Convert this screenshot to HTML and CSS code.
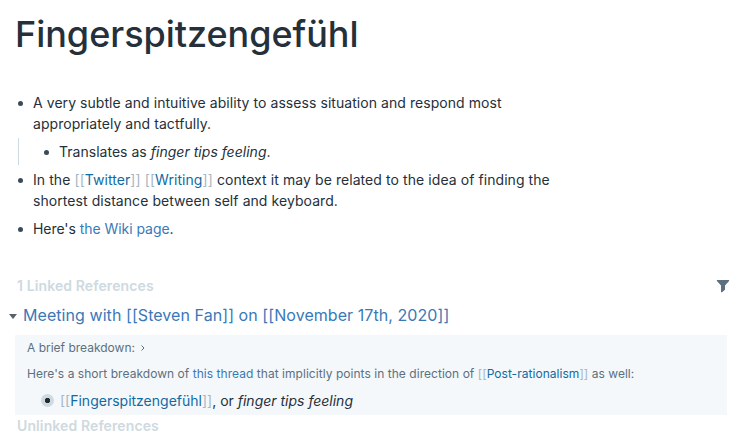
FILE: index.html
```html
<!DOCTYPE html>
<html lang="en">
<head>
<meta charset="utf-8">
<title>Fingerspitzengefühl</title>
<link rel="stylesheet" href="styles.css">
</head>
<body>
<h1>Fingerspitzengefühl</h1>
<ul class="blocks">
  <li><p>A very subtle and intuitive ability to assess situation and respond most<br>appropriately and tactfully.</p>
    <ul class="nested"><li><p>Translates as <em>finger tips feeling</em>.</p></li></ul>
  </li>
  <li><p class="wide">In the <span class="br">[[</span><a class="ref">Twitter</a><span class="br">]]</span> <span class="br">[[</span><a class="ref">Writing</a><span class="br">]]</span> context it may be related to the idea of finding the<br>shortest distance between self and keyboard.</p></li>
  <li><p class="tight">Here's <a>the Wiki page</a>.</p></li>
</ul>
<section class="references">
  <header class="refs-head"><strong>1 Linked References</strong>
    <svg class="filter" viewBox="0 0 14 14"><path d="M1.3 1h11.4q.9.3.4 1L9 6.5v4.2L6 13.2q-.8.4-1-.4V6.5L.9 2Q.4 1.3 1.3 1z"/></svg>
  </header>
  <h2><span class="caret"></span><a>Meeting with [[Steven Fan]] on [[November 17th, 2020]]</a></h2>
  <div class="card">
    <div class="crumb">A brief breakdown: <svg class="chev" viewBox="0 0 6 8"><path d="M1.5 1.5 4 4 1.5 6.5"/></svg></div>
    <div class="crumb context">Here's a short breakdown of <a>this thread</a> that implicitly points in the direction of <span class="br">[[</span><a class="ref">Post-rationalism</a><span class="br">]]</span> as well:</div>
    <div class="result"><span class="bullet"></span><p><span class="br">[[</span><a class="ref">Fingerspitzengefühl</a><span class="br">]]</span>, or <em>finger tips feeling</em></p></div>
  </div>
  <strong class="unlinked">Unlinked References</strong>
</section>
</body>
</html>
```
FILE: styles.css
```css
* { box-sizing: border-box; }
body { margin: 0; padding: 8px 15px 0; height: 444px; overflow: hidden; background: #fff; color: #25303a; font: 14px/21px Inter, sans-serif; }
h1, h2, p, ul { margin: 0; padding: 0; }
h1 { height: 84px; font-size: 36px; line-height: 52px; font-weight: 500; white-space: nowrap; letter-spacing: -.03px; }
a { color: #3a79b7; }
.ref { color: #106ba3; }
.br { color: #a7b6c2; }
ul { list-style: none; }
.blocks > li { margin-bottom: 7px; }
.blocks p { position: relative; padding-left: 18px; white-space: nowrap; word-spacing: .05px; letter-spacing: .05px; }
.blocks .wide { word-spacing: .1px; letter-spacing: .052px; }
.blocks .tight { word-spacing: 0; letter-spacing: -.05px; }
.blocks p::before { content: ""; position: absolute; left: 3px; top: 9px; width: 5px; height: 5px; border-radius: 50%; background: #394b59; }
.nested { margin: 4px 0 -1px 3px; padding: 3px 0 3px 22px; border-left: 1px solid #ced9e0; }
.blocks .nested p { letter-spacing: .02px; }
.blocks > li:first-child { margin-bottom: 5px; }
.references { margin-top: 36px; }
.refs-head { display: flex; justify-content: space-between; align-items: center; }
strong { margin-left: 2px; color: #ced9e0; font-weight: 600; letter-spacing: .11px; }
.filter { width: 14px; height: 14px; margin-right: 1px; fill: #5c7080; }
h2 { display: flex; align-items: center; gap: 6px; height: 38px; margin: 0 0 1px -6px; font-size: 16px; font-weight: 400; white-space: nowrap; letter-spacing: .065px; }
.caret { position: relative; top: 1px; border: 4px solid transparent; border-top: 5px solid #56616a; border-bottom: 0; }
.card { width: 712px; height: 80px; padding: 2px 12px 0; background: #f5f8fa; }
.crumb { height: 21px; font-size: 12px; color: #5c7080; white-space: nowrap; }
.chev { width: 6px; height: 8px; margin-left: 2px; fill: none; stroke: #5c7080; }
.context { margin-top: 5px; letter-spacing: .042px; }
.result { display: flex; align-items: center; margin: 6px 0 0 14px; gap: 6px; }
.bullet { width: 13px; height: 13px; border-radius: 50%; background: radial-gradient(circle, #202b33 2.3px, #ced9e0 3px); }
.unlinked { display: block; }
```
